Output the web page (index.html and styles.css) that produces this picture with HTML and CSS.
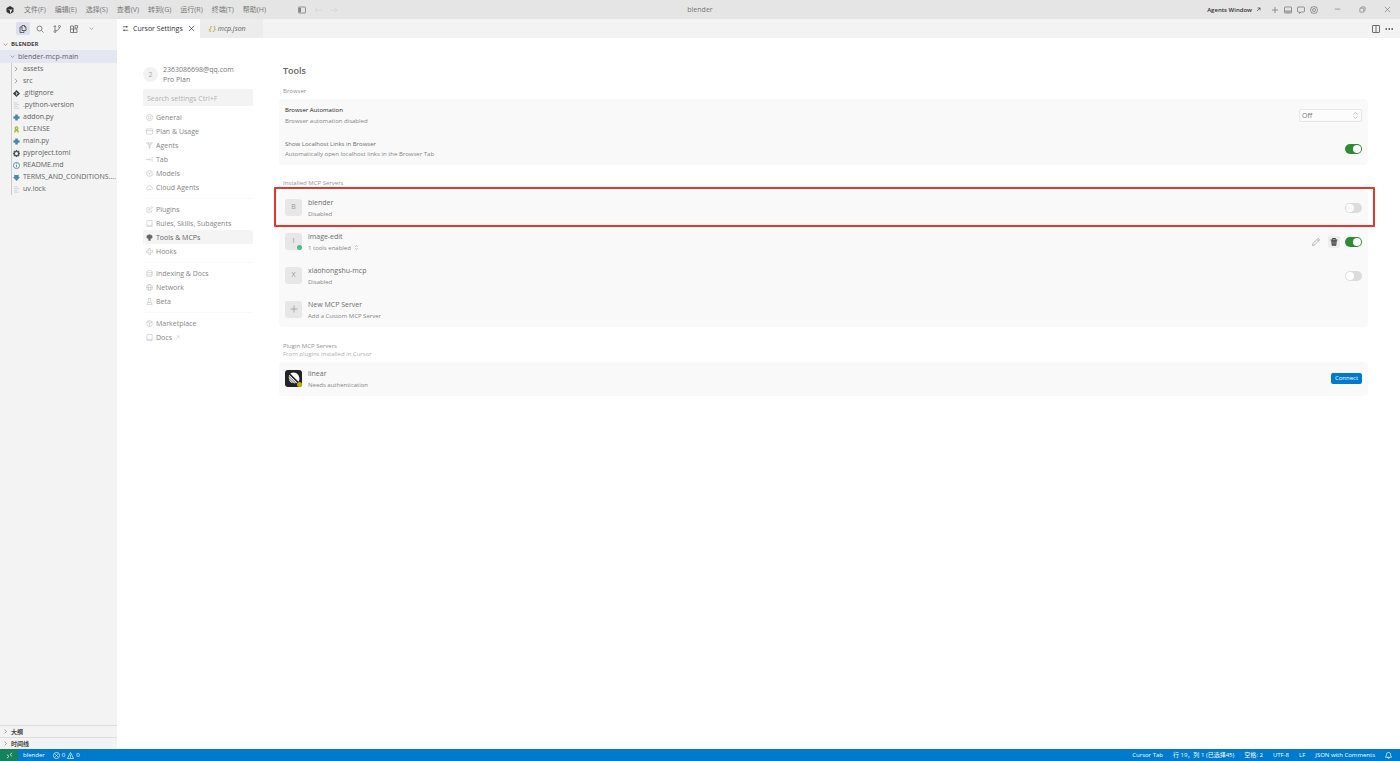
FILE: index.html
```html
<!DOCTYPE html>
<html lang="en">
<head>
  <meta charset="UTF-8" />
  <meta name="viewport" content="width=device-width, initial-scale=1.0" />
  <title>blender</title>
  <link rel="stylesheet" href="styles.css">
</head>
<body>
  <header class="titlebar">
    <svg class="logo" viewBox="0 0 16 16"><path d="M8 0l7 4v8l-7 4-7-4V4z" fill="#333"/><path d="M4 7h9l-5 9V9z" fill="#e5e5e5"/></svg>
    <nav class="menu">
      <button>文件(F)</button>
      <button>编辑(E)</button>
      <button>选择(S)</button>
      <button>查看(V)</button>
      <button>转到(G)</button>
      <button>运行(R)</button>
      <button>终端(T)</button>
      <button>帮助(H)</button>
    </nav>
    <div class="history">
      <button aria-label="Toggle side bar"><svg viewBox="0 0 16 16"><rect x="1" y="2" width="14" height="12" rx="1"/><path d="M3 4h2v8H3z" fill="currentColor"/></svg></button>
      <button class="faint" aria-label="Back"><svg viewBox="0 0 16 16"><path d="M15 8H2M7 3L2 8l5 5"/></svg></button>
      <button class="faint" aria-label="Forward"><svg viewBox="0 0 16 16"><path d="M1 8h13M9 3l5 5-5 5"/></svg></button>
    </div>
    <span class="window-title">blender</span>
    <div class="title-actions">
      <button class="agents">Agents Window <svg viewBox="0 0 16 16"><path d="M3 13L13 3M5 3h8v8" stroke-width="2"/></svg></button>
      <button aria-label="New"><svg viewBox="0 0 16 16"><path d="M8 2v12M2 8h12"/></svg></button>
      <button aria-label="Panel"><svg viewBox="0 0 16 16"><rect x="1" y="2" width="14" height="12" rx="1"/><path d="M1 10h14M3 12h10"/></svg></button>
      <button aria-label="Chat"><svg viewBox="0 0 16 16"><path d="M3 2h10q2 0 2 2v6q0 2-2 2H8l-3 3v-3H3q-2 0-2-2V4q0-2 2-2z"/></svg></button>
      <button aria-label="Settings"><svg viewBox="0 0 16 16"><path d="M8 1l2 1 3 0 1 3 1 3-1 3-1 3H10l-2 1-2-1H3l-1-3-1-3 1-3 1-3h3z"/><circle cx="8" cy="8" r="3"/></svg></button>
    </div>
    <div class="window-buttons">
      <button aria-label="Minimize"><svg viewBox="0 0 16 16"><path d="M2 7h12"/></svg></button>
      <button aria-label="Restore"><svg viewBox="0 0 16 16"><rect x="2" y="5" width="9" height="9" rx="1"/><path d="M5 5V4q0-2 2-2h5q2 0 2 2v5q0 2-2 2h-1"/></svg></button>
      <button aria-label="Close"><svg viewBox="0 0 16 16"><path d="M2 2l12 12M14 2L2 14"/></svg></button>
    </div>
  </header>

  <div class="workbench">
    <aside class="sidebar">
      <div class="activity">
        <button class="current" aria-label="Explorer"><svg viewBox="0 0 16 16"><path d="M6 1h5l3 3v7H6zM11 1v3h3M6 4H2v11h8v-4"/></svg></button>
        <button aria-label="Search"><svg viewBox="0 0 16 16"><circle cx="7" cy="7" r="5"/><path d="M11 11l4 4"/></svg></button>
        <button aria-label="Source control"><svg viewBox="0 0 16 16"><circle cx="4" cy="13" r="2"/><circle cx="13" cy="3" r="2"/><path d="M4 11V2M1 4l3-3 2 3M13 5q0 5-8 7"/></svg></button>
        <button aria-label="Extensions"><svg viewBox="0 0 16 16"><path d="M1 2h6v13H1zM1 8h13v7H7V8M10 1h5v5h-5z"/></svg></button>
        <button class="small" aria-label="More"><svg viewBox="0 0 16 16"><path d="M2 5l6 6 6-6"/></svg></button>
      </div>
      <button class="section-head"><svg viewBox="0 0 16 16"><path d="M2 5l6 6 6-6"/></svg>BLENDER</button>
      <button class="folder-root"><svg viewBox="0 0 16 16"><path d="M2 5l6 6 6-6"/></svg>blender-mcp-main</button>
      <ul class="tree">
        <li><svg class="chev" viewBox="0 0 16 16"><path d="M5 2l6 6-6 6"/></svg>assets</li>
        <li><svg class="chev" viewBox="0 0 16 16"><path d="M5 2l6 6-6 6"/></svg>src</li>
        <li><svg viewBox="0 0 16 16"><path d="M8 0l8 8-8 8-8-8z" fill="#3c4448" stroke="none"/><path d="M6 4l2 2v6M8 6l3 3" stroke="#f3f3f3"/></svg>.gitignore</li>
        <li><svg class="plain" viewBox="0 0 16 16"><path d="M2 2h8M2 6h12M2 10h8M2 14h12"/></svg>.python-version</li>
        <li><svg class="python" viewBox="0 0 16 16"><path d="M5 1h6v4h4v6h-4v4H5v-4H1V5h4z"/></svg>addon.py</li>
        <li><svg viewBox="0 0 16 16"><circle cx="8" cy="5" r="3" stroke="#a3b82d" stroke-width="3"/><path d="M6 8l-2 7M10 8l2 7M8 8v4" stroke="#a3b82d" stroke-width="3"/></svg>LICENSE</li>
        <li><svg class="python" viewBox="0 0 16 16"><path d="M5 1h6v4h4v6h-4v4H5v-4H1V5h4z"/></svg>main.py</li>
        <li><svg viewBox="0 0 16 16"><circle cx="8" cy="8" r="5" stroke="#4d5a5e" stroke-width="3"/><path d="M8 0v3M8 13v3M0 8h3M13 8h3M2 2l2 2M12 12l2 2M14 2l-2 2M2 14l2-2" stroke="#4d5a5e" stroke-width="3"/></svg>pyproject.toml</li>
        <li><svg viewBox="0 0 16 16"><circle cx="8" cy="8" r="7" stroke="#498ba7" stroke-width="2"/><path d="M8 7v5M8 3v2" stroke="#498ba7" stroke-width="2"/></svg>README.md</li>
        <li><svg class="python" viewBox="0 0 16 16"><path d="M3 1l2 1h6l2-1v6h3l-8 9-8-9h3z"/></svg><span class="clip">TERMS_AND_CONDITIONS....</span></li>
        <li><svg class="plain" viewBox="0 0 16 16"><path d="M2 2h8M2 6h12M2 10h8M2 14h12"/></svg>uv.lock</li>
      </ul>
      <div class="panels">
        <button class="section-head"><svg viewBox="0 0 16 16"><path d="M5 2l6 6-6 6"/></svg>大纲</button>
        <button class="section-head"><svg viewBox="0 0 16 16"><path d="M5 2l6 6-6 6"/></svg>时间线</button>
      </div>
    </aside>

    <section class="editor">
      <div class="tabs">
        <div class="tab open"><svg viewBox="0 0 16 16"><path d="M2 4h12M2 12h12M10 2v4M5 10v4"/></svg>Cursor Settings<button aria-label="Close tab"><svg viewBox="0 0 16 16"><path d="M2 2l12 12M14 2L2 14"/></svg></button></div>
        <div class="tab preview"><b>{ }</b><em>mcp.json</em></div>
        <div class="tab-actions">
          <button aria-label="Split editor"><svg viewBox="0 0 16 16"><rect x="1" y="1" width="14" height="14" rx="1"/><path d="M8 1v14"/></svg></button>
          <button aria-label="More actions"><svg viewBox="0 0 16 16"><path d="M1 8h3M7 8h3M13 8h3" stroke-width="3"/></svg></button>
        </div>
      </div>

      <div class="settings">
        <nav class="settings-nav">
          <div class="account">
            <span class="avatar">2</span>
            <div><p>2363086698@qq.com</p><p>Pro Plan</p></div>
          </div>
          <input class="search" type="text" placeholder="Search settings Ctrl+F" aria-label="Search settings">
          <div class="group">
            <a href="#"><svg viewBox="0 0 16 16"><circle cx="8" cy="8" r="7"/><circle cx="8" cy="8" r="3"/></svg>General</a>
            <a href="#"><svg viewBox="0 0 16 16"><rect x="1" y="2" width="14" height="12" rx="1"/><path d="M1 6h14"/></svg>Plan &amp; Usage</a>
            <a href="#"><svg viewBox="0 0 16 16"><path d="M1 2h14L9 8v6H7V8zM5 2l3 6 3-6"/></svg>Agents</a>
            <a href="#"><svg viewBox="0 0 16 16"><path d="M0 8h10M7 5l3 3-3 3M14 2v12"/></svg>Tab</a>
            <a href="#"><svg viewBox="0 0 16 16"><path d="M8 1l6 3v8l-6 3-6-3V4zM4 6l4 2 4-2M8 8v4"/></svg>Models</a>
            <a href="#"><svg viewBox="0 0 16 16"><path d="M4 13q-3 0-3-3t3-3q1-4 4-4t4 4q3 0 3 3t-3 3z"/></svg>Cloud Agents</a>
          </div>
          <div class="group">
            <a href="#"><svg viewBox="0 0 16 16"><path d="M8 4H2v10h11V9M6 10l1-3 6-6 2 2-6 6z"/></svg>Plugins</a>
            <a href="#"><svg viewBox="0 0 16 16"><path d="M2 3q0-2 2-2h10v14H4q-2 0-2-2zM2 12h12"/></svg>Rules, Skills, Subagents</a>
            <a href="#" class="selected"><svg viewBox="0 0 16 16"><path d="M8 1l6 3v5l-4 2v4H6v-4L2 9V4z" fill="currentColor"/></svg>Tools &amp; MCPs</a>
            <a href="#"><svg viewBox="0 0 16 16"><path d="M6 1h4v5h5v4h-5v5H6v-5H1V6h5z"/></svg>Hooks</a>
          </div>
          <div class="group">
            <a href="#"><svg viewBox="0 0 16 16"><rect x="2" y="1" width="12" height="14" rx="3"/><path d="M2 6h12M2 11h12"/></svg>Indexing &amp; Docs</a>
            <a href="#"><svg viewBox="0 0 16 16"><circle cx="8" cy="8" r="7"/><ellipse cx="8" cy="8" rx="3" ry="7"/><path d="M1 8h14"/></svg>Network</a>
            <a href="#"><svg viewBox="0 0 16 16"><path d="M5 1h6M6 1v5L2 15h12L10 6V1M4 10h8"/></svg>Beta</a>
          </div>
          <div class="group">
            <a href="#"><svg viewBox="0 0 16 16"><path d="M8 1l6 3v8l-6 3-6-3V4zM2 4l6 4 6-4M8 8v7M5 2l6 4"/></svg>Marketplace</a>
            <a href="#"><svg viewBox="0 0 16 16"><path d="M2 3q0-2 2-2h10v14H4q-2 0-2-2zM2 12h12"/></svg>Docs <svg class="out" viewBox="0 0 16 16"><path d="M3 13L13 3M5 3h8v8"/></svg></a>
          </div>
        </nav>

        <main class="content">
          <h1>Tools</h1>

          <h2>Browser</h2>
          <div class="card browser">
            <div class="row">
              <label class="info" for="automation"><strong>Browser Automation</strong><span>Browser automation disabled</span></label>
              <div class="select">
                <select id="automation"><option>Off</option></select>
                <svg viewBox="0 0 16 16"><path d="M3 6l5-5 5 5M3 10l5 5 5-5"/></svg>
              </div>
            </div>
            <div class="row">
              <label class="info tight" for="links"><b>Show Localhost Links in Browser</b><span>Automatically open localhost links in the Browser Tab</span></label>
              <input class="toggle" id="links" type="checkbox" checked>
            </div>
          </div>

          <h2>Installed MCP Servers</h2>
          <div class="card servers">
            <div class="row marked">
              <span class="badge">B</span>
              <label class="info" for="blender"><b>blender</b><span>Disabled</span></label>
              <input class="toggle" id="blender" type="checkbox">
            </div>
            <div class="row">
              <span class="badge">I<i class="dot"></i></span>
              <label class="info" for="image-edit"><b>image-edit</b><span>1 tools enabled <svg viewBox="0 0 16 16"><path d="M3 6l5-5 5 5M3 10l5 5 5-5"/></svg></span></label>
              <button class="tool" aria-label="Edit"><svg viewBox="0 0 16 16"><path d="M1 15l1-4L12 1q2 0 3 3L5 14zM10 3l3 3"/></svg></button>
              <button class="tool trash" aria-label="Delete"><svg viewBox="0 0 16 16"><path d="M3 5h10l-1 10H4z" fill="currentColor"/><path d="M1 4h14M5 3V1h6v2" stroke-width="2"/><path d="M6 7v6M10 7v6" stroke="#eee"/></svg></button>
              <input class="toggle" id="image-edit" type="checkbox" checked>
            </div>
            <div class="row">
              <span class="badge">X</span>
              <label class="info" for="xiaohongshu"><b>xiaohongshu-mcp</b><span>Disabled</span></label>
              <input class="toggle" id="xiaohongshu" type="checkbox">
            </div>
            <div class="row">
              <button class="badge" aria-label="Add server"><svg viewBox="0 0 16 16"><path d="M8 1v14M1 8h14"/></svg></button>
              <div class="info"><b>New MCP Server</b><span>Add a Custom MCP Server</span></div>
            </div>
          </div>

          <h2>Plugin MCP Servers</h2>
          <p class="note">From plugins installed in Cursor</p>
          <div class="card plugins">
            <div class="row">
              <span class="badge linear"><svg viewBox="0 0 16 16"><path d="M1 9l6 6Q2 14 1 9zM1 6l9 9-2 0-7-7zM2 4l10 10-1 1L1 5zM3 2q6-3 10 1 4 5 1 10z" fill="#fff" stroke="none"/></svg><i class="dot warn"></i></span>
              <div class="info"><b>linear</b><span>Needs authentication</span></div>
              <button class="connect">Connect</button>
            </div>
          </div>
        </main>
      </div>
    </section>
  </div>

  <footer class="statusbar">
    <button class="remote" aria-label="Remote"><svg viewBox="0 0 16 16"><path d="M2 6l5 4-5 4M14 2L9 6l5 4"/></svg></button>
    <span>blender</span>
    <span class="problems"><svg viewBox="0 0 16 16"><circle cx="8" cy="8" r="7"/><path d="M5 5l6 6M11 5l-6 6"/></svg>0 <svg viewBox="0 0 16 16"><path d="M8 1l7 14H1zM8 6v5M8 12v2"/></svg>0</span>
    <div class="status-right">
      <span>Cursor Tab</span>
      <span>行 19，列 1 (已选择45)</span>
      <span>空格: 2</span>
      <span>UTF-8</span>
      <span>LF</span>
      <span>JSON with Comments</span>
      <svg viewBox="0 0 16 16"><path d="M1 12h14l-2-3V6q0-5-5-5T3 6v3zM6 12q0 3 2 3t2-3"/></svg>
    </div>
  </footer>
</body>
</html>
```

FILE: styles.css
```css
* {
  box-sizing: border-box;
}
body {
  margin: 0;
  height: 100vh;
  display: flex;
  flex-direction: column;
  overflow: hidden;
  background: #fff;
  color: #616161;
  font-family: "Open Sans", "Noto Sans CJK SC", sans-serif;
  font-size: 7px;
  line-height: 10px;
}
button {
  display: flex;
  align-items: center;
  margin: 0;
  padding: 0;
  border: none;
  background: none;
  color: inherit;
  font: inherit;
  cursor: pointer;
}
svg {
  width: 8px;
  height: 8px;
  flex: none;
  fill: none;
  stroke: currentColor;
  stroke-width: 1.5;
}
h1, h2, p, ul {
  margin: 0;
  padding: 0;
}

/* title bar */
.titlebar {
  position: relative;
  display: flex;
  align-items: center;
  height: 19px;
  padding: 0 9px 0 6px;
  background: #e5e5e5;
  color: #777;
}
.logo {
  stroke: none;
}
.menu {
  display: flex;
  gap: 9px;
  margin-left: 10px;
}
.history {
  display: flex;
  gap: 8px;
  margin-left: 32px;
}
.faint {
  opacity: 0.15;
}
.window-title {
  position: absolute;
  left: 50%;
  transform: translateX(-50%);
}
.title-actions {
  display: flex;
  gap: 5px;
  margin-left: auto;
}
.agents {
  gap: 4px;
  margin-right: 5px;
  color: #333;
  font-size: 6px;
  font-weight: 600;
}
.agents svg {
  width: 5px;
  height: 5px;
}
.window-buttons {
  display: flex;
  gap: 18px;
  margin-left: 16px;
}
.window-buttons svg {
  width: 7px;
  height: 7px;
}

.workbench {
  flex: 1;
  display: flex;
  min-height: 0;
}

/* explorer */
.sidebar {
  display: flex;
  flex-direction: column;
  width: 117px;
  background: #f3f3f3;
}
.activity {
  display: flex;
  gap: 3px;
  height: 19px;
  padding-left: 16px;
  align-items: center;
}
.activity button {
  justify-content: center;
  width: 14px;
  height: 13px;
  border-radius: 2px;
}
.activity .current {
  background: #dddeee;
  color: #444;
}
.activity .small svg {
  width: 5px;
  height: 5px;
}
.section-head,
.folder-root {
  gap: 3px;
  width: 100%;
  height: 12px;
  padding-left: 3px;
}
.section-head {
  color: #444;
  font-size: 6px;
  font-weight: 700;
}
.section-head svg,
.folder-root svg {
  width: 5px;
  height: 5px;
}
.folder-root {
  height: 13px;
  padding-left: 10px;
  background: #e4e6f1;
}
.tree {
  list-style: none;
  margin-left: 11px;
  border-left: 1px solid #ccc;
}
.tree li {
  display: flex;
  align-items: center;
  gap: 3px;
  height: 12px;
  padding-left: 1px;
}
.tree svg {
  width: 7px;
  height: 7px;
}
.tree .chev {
  width: 6px;
  height: 6px;
  margin-right: 1px;
}
.tree .plain {
  color: #c4c8ca;
}
.python path {
  fill: #498ba7;
  stroke: none;
}
.clip {
  overflow: hidden;
  white-space: nowrap;
}
.panels {
  margin-top: auto;
}
.panels button {
  border-top: 1px solid #dcdcdc;
}

/* editor */
.editor {
  flex: 1;
  min-width: 0;
}
.tabs {
  display: flex;
  height: 19px;
  background: #f3f3f3;
}
.tab {
  display: flex;
  align-items: center;
  gap: 4px;
  padding: 0 5px;
  white-space: nowrap;
}
.tab svg {
  width: 7px;
  height: 7px;
}
.tab button {
  margin-left: auto;
}
.tab.open {
  width: 83px;
  background: #fff;
  color: #333;
}
.tab.preview {
  width: 63px;
  gap: 2px;
  padding-left: 9px;
  background: #ececec;
}
.tab b {
  color: #b7b73b;
  font-style: italic;
}
.tab-actions {
  display: flex;
  gap: 5px;
  margin-left: auto;
  padding-right: 7px;
  color: #444;
}

/* settings page */
.settings {
  display: flex;
  gap: 26px;
  padding: 26px 32px 0 26px;
  color: #777;
}
.settings-nav {
  width: 110px;
}
.account {
  display: flex;
  align-items: center;
  gap: 5px;
  height: 21px;
}
.avatar {
  width: 15px;
  height: 15px;
  border-radius: 50%;
  background: #f2f2f2;
  color: #aaa;
  line-height: 15px;
  text-align: center;
}
.search {
  display: block;
  width: 100%;
  height: 17px;
  margin: 4px 0;
  padding: 1px 4px 0;
  border: none;
  border-radius: 2px;
  background: #f3f3f3;
  font: inherit;
}
.search::placeholder {
  color: #b4b4b4;
}
.group {
  margin-bottom: 3px;
  padding-bottom: 4px;
  border-bottom: 1px solid #f9f9f9;
}
.group:last-child {
  border-bottom: none;
}
.group a {
  display: flex;
  align-items: center;
  gap: 3px;
  height: 14px;
  padding: 1px 0 0 3px;
  border-radius: 2px;
  color: #858585;
  text-decoration: none;
}
.group svg {
  width: 7px;
  height: 7px;
  color: #aaa;
  stroke-width: 1;
}
.group .out {
  width: 5px;
  height: 5px;
}
.group .selected,
.group .selected svg {
  color: #666;
}
.group .selected {
  background: #f4f4f4;
}

.content {
  flex: 1;
}
h1 {
  padding: 1px 4px 0;
  color: #666;
  font-size: 9px;
  font-weight: 600;
  line-height: 12px;
}
h2,
.note {
  padding: 0 4px;
  color: #929292;
  font-size: 6px;
  font-weight: 400;
  line-height: 8px;
}
.note {
  color: #b0b0b0;
}
h1 + h2 {
  margin-top: 10px;
}
.card {
  border-radius: 4px;
  background: #f9f9f9;
}
.browser {
  margin: 4px 0 14px;
}
.servers {
  margin: 4px 0 15px;
}
.plugins {
  margin-top: 4px;
}
.row {
  position: relative;
  display: flex;
  align-items: center;
  gap: 6px;
  height: 34px;
  padding: 0 6px;
}
.browser .row {
  height: 33px;
}
.marked::after {
  content: '';
  position: absolute;
  inset: -4px -7px -2px -5px;
  border: 2px solid #e8352b;
  border-radius: 1px;
  pointer-events: none;
}
.info {
  display: flex;
  flex-direction: column;
  gap: 1px;
  margin-right: auto;
  color: #858585;
  font-size: 6px;
}
.info.tight {
  gap: 0;
}
.info b {
  color: #6c6c6c;
  font-weight: 400;
  font-size: 7px;
}
.info strong {
  color: #222;
  font-weight: 400;
}
.browser .info b {
  font-size: 6px;
}
.info svg {
  width: 5px;
  height: 5px;
  margin-left: 2px;
}
.badge {
  position: relative;
  display: flex;
  align-items: center;
  justify-content: center;
  width: 17px;
  height: 17px;
  margin-bottom: 2px;
  border-radius: 3px;
  background: #e7e7e7;
  color: #999;
  font-size: 7px;
}
.linear {
  background: #222326;
}
.linear svg {
  width: 12px;
  height: 12px;
}
.dot {
  position: absolute;
  right: 0;
  bottom: 0;
  width: 5px;
  height: 5px;
  border-radius: 50%;
  background: #4dba87;
}
.dot.warn {
  background: #c9a900;
}
.select {
  position: relative;
}
select {
  display: block;
  width: 63px;
  height: 13px;
  padding: 0 2px;
  border: 1px solid #e6e6e6;
  border-radius: 2px;
  background: #fcfcfc;
  color: #777;
  font-family: inherit;
  font-size: 7px;
  appearance: none;
}
.select svg {
  position: absolute;
  top: 3px;
  right: 3px;
  width: 7px;
  height: 7px;
  stroke-width: 1;
  pointer-events: none;
}
.toggle {
  display: flex;
  align-items: center;
  width: 17px;
  height: 10px;
  margin: 0;
  padding: 1px;
  border-radius: 5px;
  background: #dcdcdc;
  appearance: none;
}
.toggle::before {
  content: '';
  width: 8px;
  height: 8px;
  border-radius: 50%;
  background: #fff;
}
.toggle:checked {
  justify-content: flex-end;
  background: #2e8b32;
}
.tool {
  justify-content: center;
  width: 12px;
  height: 12px;
  border-radius: 2px;
}
.tool svg {
  stroke-width: 1;
}
.trash {
  margin-right: -1px;
  background: #ededed;
  color: #444;
}
.connect {
  justify-content: center;
  width: 31px;
  height: 11px;
  margin-bottom: 2px;
  border-radius: 2px;
  background: #007acc;
  color: #fff;
  font-size: 6px;
}

/* status bar */
.statusbar {
  display: flex;
  align-items: center;
  gap: 8px;
  height: 12px;
  padding-right: 8px;
  background: #007acc;
  color: #fff;
  font-size: 6px;
  white-space: nowrap;
}
.remote {
  justify-content: center;
  width: 18px;
  height: 12px;
  margin-right: -3px;
  background: #16825d;
}
.problems {
  display: flex;
  align-items: center;
  gap: 2px;
}
.statusbar svg {
  width: 7px;
  height: 7px;
}
.status-right {
  display: flex;
  align-items: center;
  gap: 10px;
  margin-left: auto;
}
```
